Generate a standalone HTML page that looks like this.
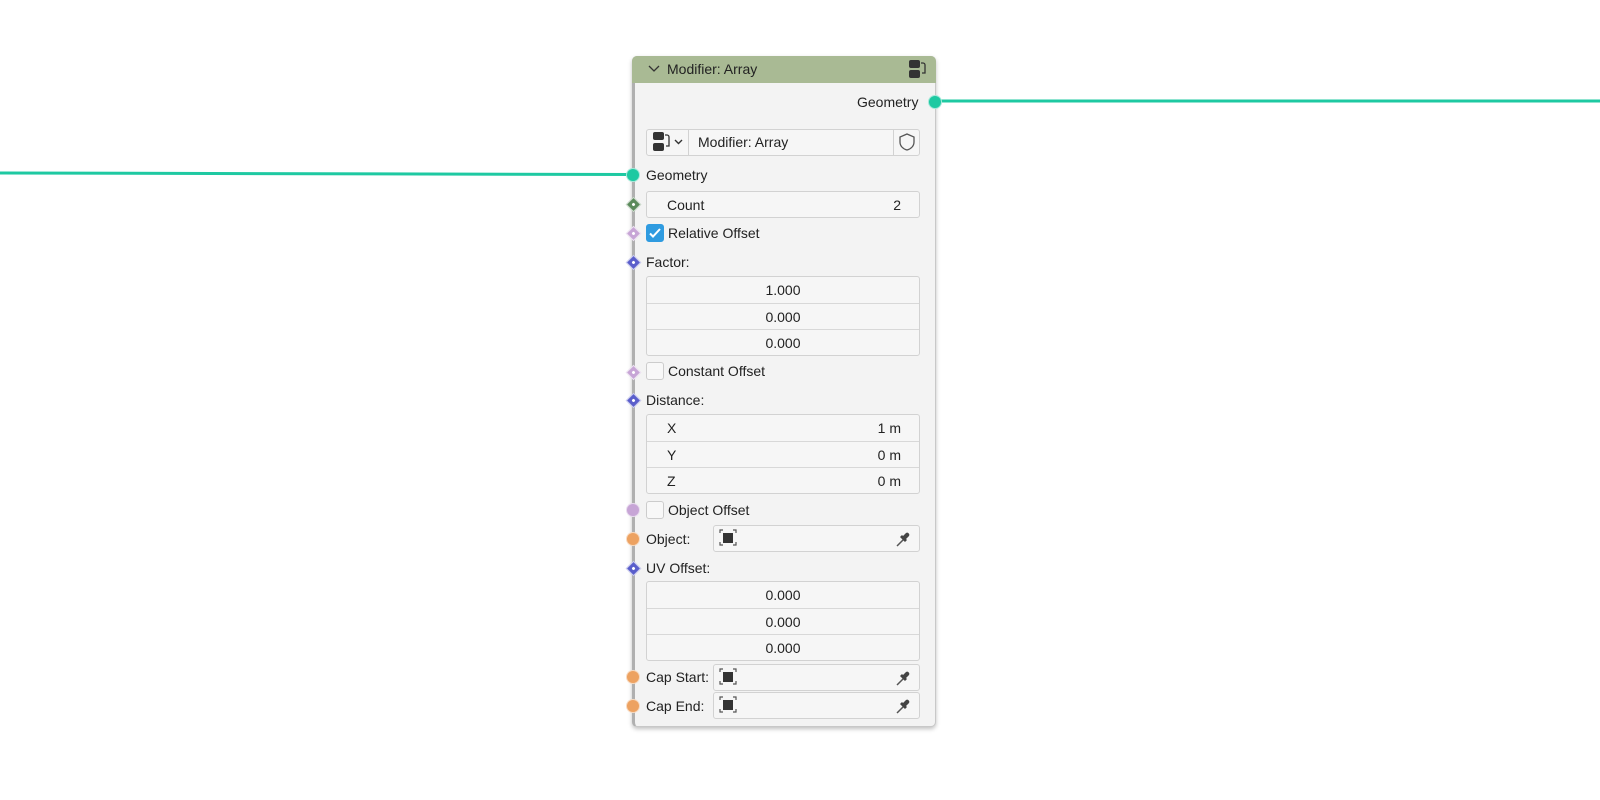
<!DOCTYPE html>
<html><head><style>
body{margin:0;width:1600px;height:800px;background:#fff;position:relative;overflow:hidden;font-family:"Liberation Sans","DejaVu Sans",sans-serif;font-size:14px;color:#222}
.a{position:absolute}
.node{left:632px;top:56px;width:304px;height:671px;background:#f3f3f3;border:1px solid #c8c8c8;border-left:3px solid #b0b0b0;border-radius:5px;box-sizing:border-box;box-shadow:0 2px 4px rgba(0,0,0,.25)}
.hdr{left:632px;top:56px;width:304px;height:27px;background:#a9ba94;border-radius:5px 5px 0 0}
.f{position:absolute;left:646px;width:274px;background:#f6f6f6;border:1px solid #d2d2d2;box-sizing:border-box;border-radius:3px}
.r{position:absolute;left:0;right:0;height:26px;line-height:26px;border-top:1px solid #d8d8d8;text-align:center}
.r:first-child{border-top:none}
.lbl{position:absolute;line-height:16px}
.dot{position:absolute;width:12px;height:12px;border-radius:50%;margin:-7px 0 0 -7px;border:1px solid rgba(255,255,255,.6)}
.dia{position:absolute;width:9px;height:9px;transform:rotate(45deg);margin:-5.5px 0 0 -5.5px;border:1px solid rgba(255,255,255,.7)}
.dia:after{content:"";position:absolute;left:3px;top:3px;width:3px;height:3px;background:#fff;border-radius:50%}
.cb{position:absolute;left:646px;width:18px;height:18px;border:1px solid #ccc;border-radius:3px;background:#f8f8f8;box-sizing:border-box}
</style></head><body>
<svg class="a" style="left:0;top:0" width="1600" height="800"><line x1="0" y1="173" x2="632" y2="174.5" stroke="#1ec9a2" stroke-width="3"/><line x1="936" y1="101" x2="1600" y2="101" stroke="#1ec9a2" stroke-width="3"/></svg>
<div class="a node"></div>
<div class="a hdr"></div>
<svg class="a" style="left:647px;top:63px" width="14" height="12"><path d="M2 3l5 5 5-5" stroke="#333" fill="none" stroke-width="1.3"/></svg>
<div class="lbl" style="left:667px;top:61px">Modifier: Array</div>
<svg class="a" style="left:907px;top:59px" width="20" height="20"><rect x="2" y="1" width="11" height="8" rx="2" fill="#333"/><rect x="2" y="11" width="11" height="8" rx="2" fill="#333"/><path d="M14 4h2a2 2 0 0 1 2 2v8h-3" stroke="#333" fill="none" stroke-width="1.3"/></svg>
<div class="lbl" style="left:857px;top:94px">Geometry</div>
<div class="dot" style="left:935px;top:102px;background:#1ec9a2"></div>
<div class="f" style="top:129px;height:27px"></div>
<div class="a" style="left:688px;top:129px;width:1px;height:27px;background:#d2d2d2"></div>
<div class="a" style="left:893px;top:129px;width:1px;height:27px;background:#d2d2d2"></div>
<svg class="a" style="left:651px;top:131px" width="36" height="22"><rect x="2" y="1" width="11" height="8" rx="2" fill="#333"/><rect x="2" y="12" width="11" height="8" rx="2" fill="#333"/><path d="M14 4h2a2 2 0 0 1 2 2v9h-3" stroke="#333" fill="none" stroke-width="1.3"/><path d="M24 9l3.5 3.5L31 9" stroke="#333" fill="none" stroke-width="1.4"/></svg>
<div class="lbl" style="left:698px;top:134px">Modifier: Array</div>
<svg class="a" style="left:897px;top:132px" width="20" height="20"><path d="M10 2l7 3v5c0 4-3 7-7 8-4-1-7-4-7-8V5z" fill="none" stroke="#555" stroke-width="1.3"/></svg>
<div class="dot" style="left:633px;top:175px;background:#1ec9a2"></div>
<div class="lbl" style="left:646px;top:167px">Geometry</div>
<div class="dia" style="left:633px;top:204px;background:#5b8a5b"></div>
<div class="f" style="top:191px;height:27px"><div class="r" style="text-align:left;padding-left:20px">Count<span style="position:absolute;right:18px">2</span></div></div>
<div class="dia" style="left:633px;top:233px;background:#c7a5d6"></div>
<div class="cb" style="top:224px;background:#2f9be0;border-color:#2f9be0"><svg width="16" height="16"><path d="M3 8.5l3 3 7-7.5" stroke="#fff" stroke-width="2" fill="none"/></svg></div>
<div class="lbl" style="left:668px;top:225px">Relative Offset</div>
<div class="dia" style="left:633px;top:262px;background:#5a5ecb"></div>
<div class="lbl" style="left:646px;top:254px">Factor:</div>
<div class="f" style="top:276px;height:80px"><div class="r" style="top:0">1.000</div><div class="r" style="top:26px">0.000</div><div class="r" style="top:52px">0.000</div></div>
<div class="dia" style="left:633px;top:372px;background:#c7a5d6"></div>
<div class="cb" style="top:362px"></div>
<div class="lbl" style="left:668px;top:363px">Constant Offset</div>
<div class="dia" style="left:633px;top:400px;background:#5a5ecb"></div>
<div class="lbl" style="left:646px;top:392px">Distance:</div>
<div class="f" style="top:414px;height:80px"><div class="r" style="top:0;text-align:left;padding-left:20px">X<span style="position:absolute;right:18px">1 m</span></div><div class="r" style="top:26px;text-align:left;padding-left:20px">Y<span style="position:absolute;right:18px">0 m</span></div><div class="r" style="top:52px;text-align:left;padding-left:20px">Z<span style="position:absolute;right:18px">0 m</span></div></div>
<div class="dot" style="left:633px;top:510px;background:#c7a5d6"></div>
<div class="cb" style="top:501px"></div>
<div class="lbl" style="left:668px;top:502px">Object Offset</div>
<div class="dot" style="left:633px;top:539px;background:#eda261"></div>
<div class="lbl" style="left:646px;top:531px">Object:</div>
<div class="dia" style="left:633px;top:568px;background:#5a5ecb"></div>
<div class="lbl" style="left:646px;top:560px">UV Offset:</div>
<div class="f" style="top:581px;height:80px"><div class="r" style="top:0">0.000</div><div class="r" style="top:26px">0.000</div><div class="r" style="top:52px">0.000</div></div>
<div class="dot" style="left:633px;top:677px;background:#eda261"></div>
<div class="lbl" style="left:646px;top:669px">Cap Start:</div>
<div class="dot" style="left:633px;top:706px;background:#eda261"></div>
<div class="lbl" style="left:646px;top:698px">Cap End:</div>
<div class="f" style="left:713px;width:207px;top:525px;height:27px"></div>
<div class="f" style="left:713px;width:207px;top:664px;height:27px"></div>
<div class="f" style="left:713px;width:207px;top:692px;height:27px"></div>
<svg class="a" style="left:718px;top:527px" width="200" height="22"><path d="M2 6V3h3M15 3h3v3M18 15v3h-3M5 18H2v-3" stroke="#555" fill="none" stroke-width="1.2"/><rect x="5" y="6" width="10" height="10" fill="#333"/><path d="M179 19l7-7" stroke="#555" stroke-width="1.5"/><path d="M182 10l5 5 2-2-1-1 3-3a2.2 2.2 0 0 0-3-3l-3 3-1-1z" fill="#444"/></svg>
<svg class="a" style="left:718px;top:666px" width="200" height="22"><path d="M2 6V3h3M15 3h3v3M18 15v3h-3M5 18H2v-3" stroke="#555" fill="none" stroke-width="1.2"/><rect x="5" y="6" width="10" height="10" fill="#333"/><path d="M179 19l7-7" stroke="#555" stroke-width="1.5"/><path d="M182 10l5 5 2-2-1-1 3-3a2.2 2.2 0 0 0-3-3l-3 3-1-1z" fill="#444"/></svg>
<svg class="a" style="left:718px;top:694px" width="200" height="22"><path d="M2 6V3h3M15 3h3v3M18 15v3h-3M5 18H2v-3" stroke="#555" fill="none" stroke-width="1.2"/><rect x="5" y="6" width="10" height="10" fill="#333"/><path d="M179 19l7-7" stroke="#555" stroke-width="1.5"/><path d="M182 10l5 5 2-2-1-1 3-3a2.2 2.2 0 0 0-3-3l-3 3-1-1z" fill="#444"/></svg>
</body></html>
